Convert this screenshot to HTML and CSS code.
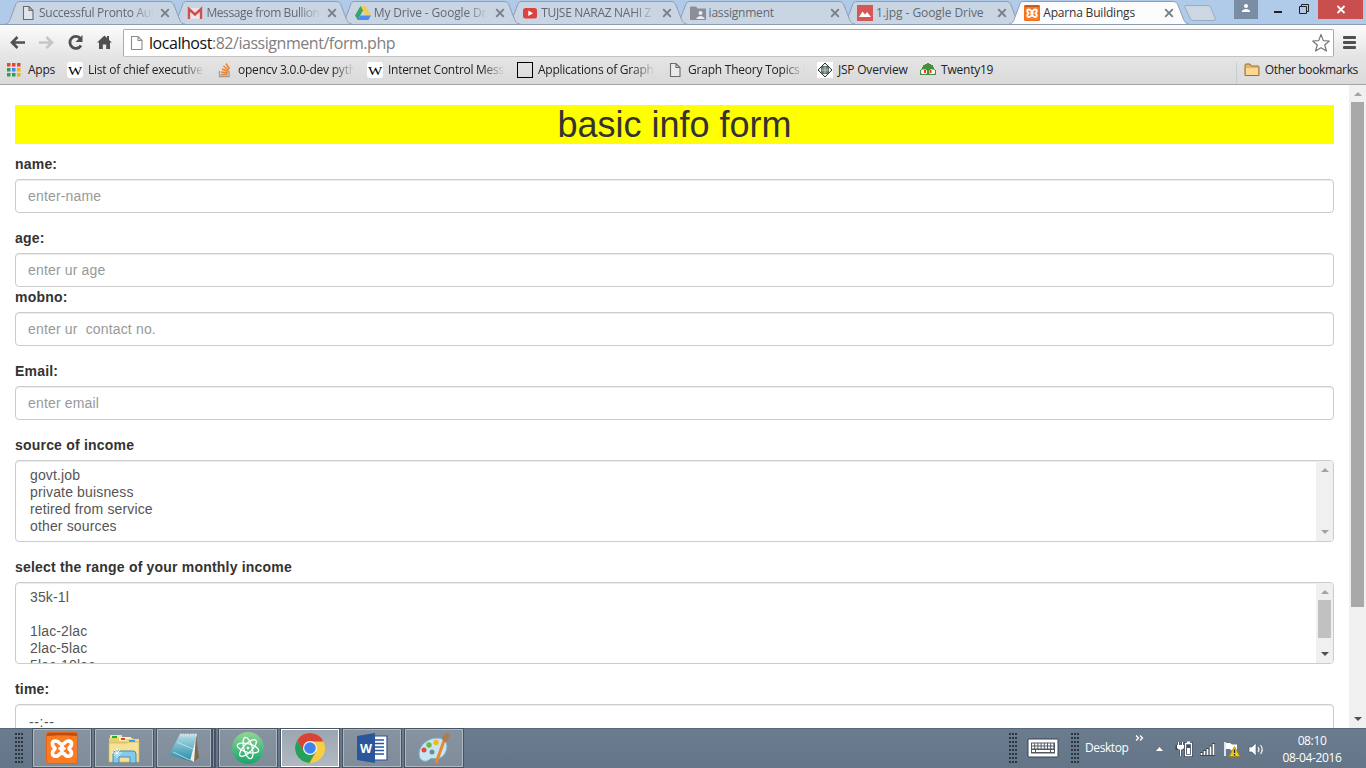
FILE: index.html
```html
<!DOCTYPE html>
<html lang="en">
<head>
<meta charset="utf-8">
<title>Aparna Buildings</title>
<link rel="stylesheet" href="styles.css">
</head>
<body>
<svg width="0" height="0" class="defs">
  <defs>
    <symbol id="tab" viewBox="0 0 182 25"><path d="M0 24C4 24 5 20 6 17L10.500 5C11.500 2 12.500 1.500 15 1.500H164C167 1.500 168 3 169 5L174 18C175.500 22 177 24 180 24" /></symbol>
    <symbol id="x" viewBox="0 0 10 10"><path d="M1.200 1.200L8.800 8.800M8.800 1.200L1.200 8.800" fill="none" stroke="currentColor" stroke-width="1.900"/></symbol>
    <symbol id="page" viewBox="0 0 16 16"><path d="M3.500 1.500H9L13 5.500V14.500H3.500ZM9 1.500V5.500H13" fill="#f6f6f6" fill-opacity=".5" stroke="#6b6b6b" stroke-width="1.100"/></symbol>
    <symbol id="xampp" viewBox="0 0 32 32"><rect width="32" height="32" rx="3" fill="#e8650f"/><rect x="1" y="1" width="30" height="30" rx="3" fill="#fb7a24"/><path d="M1 3Q1 1 3 1H29Q31 1 31 3V4Q16 2.500 1 4Z" fill="#ba4e18"/><path d="M14 11.500C11 7.500 6 8.500 6.500 12.500C6.700 15 9 15.500 9 16.500C9 17.500 6.500 18.500 6.500 21C6.500 25 11.500 25.500 14 21.500H18C20.500 25.500 25.500 25 25.500 21C25.500 18.500 23 17.500 23 16.500C23 15.500 25.300 15 25.500 12.500C26 8.500 21 7.500 18 11.500M14 16.500H18M16 12V21" fill="none" stroke="#fff" stroke-width="3.600" stroke-linejoin="round" stroke-linecap="round"/></symbol>
    <symbol id="wiki" viewBox="0 0 16 16"><rect width="16" height="16" rx="3" fill="#fff"/><text x="8" y="12.500" text-anchor="middle" font-family="Liberation Serif, serif" font-size="13.500" textLength="14" lengthAdjust="spacingAndGlyphs" fill="#000">W</text></symbol>
  </defs>
</svg>
<div class="screen">
  <header class="browser">
    <div class="tabstrip">
      <div class="tab t1"><svg class="shape"><use href="#tab"/></svg><svg class="ico"><use href="#page"/></svg><span class="ttl fade">Successful Pronto Aut</span><svg class="x"><use href="#x"/></svg></div>
      <div class="tab t2"><svg class="shape"><use href="#tab"/></svg><svg class="ico" viewBox="0 0 16 16"><path d="M1 3H15V14H1Z" fill="#e9e7ea"/><path d="M2 14V4L8 9.500L14 4V14" fill="none" stroke="#cf514d" stroke-width="2.400"/></svg><span class="ttl fade">Message from Bullion</span><svg class="x"><use href="#x"/></svg></div>
      <div class="tab t3"><svg class="shape"><use href="#tab"/></svg><svg class="ico" viewBox="0 0 16 16"><path d="M5.500 1H10.500L16 10.500H10.500Z" fill="#f2cb52"/><path d="M5.500 1L8 5.500L2.700 15L0 10.500Z" fill="#35a667"/><path d="M5.300 10.500H16L13.400 15H2.700Z" fill="#4d8bed"/></svg><span class="ttl fade">My Drive - Google Dr</span><svg class="x"><use href="#x"/></svg></div>
      <div class="tab t4"><svg class="shape"><use href="#tab"/></svg><svg class="ico" viewBox="0 0 16 16"><rect x="1" y="3" width="14" height="10.500" rx="2.500" fill="#dc4340"/><path d="M6.300 5.500V11L11 8.200Z" fill="#fff"/></svg><span class="ttl fade">TUJSE NARAZ NAHI Z</span><svg class="x"><use href="#x"/></svg></div>
      <div class="tab t5"><svg class="shape"><use href="#tab"/></svg><svg class="ico" viewBox="0 0 16 16"><path d="M0 2.500Q0 1.500 1 1.500H6L7.500 3.500H16V15H0Z" fill="#8b8f95"/><circle cx="10.500" cy="8" r="2" fill="#e6edf5"/><path d="M6.500 14V13Q10.500 9 14.500 13V14Z" fill="#e6edf5"/></svg><span class="ttl">iassignment</span><svg class="x"><use href="#x"/></svg></div>
      <div class="tab t6"><svg class="shape"><use href="#tab"/></svg><svg class="ico" viewBox="0 0 16 16"><rect width="16" height="16" fill="#d55854"/><path d="M2 12L5.500 6.500L8 9.500L10 7L14 12Z" fill="#fff"/></svg><span class="ttl">1.jpg - Google Drive</span><svg class="x"><use href="#x"/></svg></div>
      <div class="tab active"><svg class="shape"><use href="#tab"/></svg><svg class="ico"><use href="#xampp"/></svg><span class="ttl">Aparna Buildings</span><svg class="x"><use href="#x"/></svg></div>
      <svg class="newtab" viewBox="0 0 34 18"><path d="M3 1.500H25Q27 1.500 28 4L32 14Q33 16.500 31 16.500H10Q8 16.500 7 14L2 3.500Q1 1.500 3 1.500Z" fill="#cdd7e4" stroke="#9cabbf"/></svg>
      <div class="winctl">
        <svg class="user" viewBox="0 0 24 19"><circle cx="12" cy="6" r="2" fill="#fff"/><path d="M8 12V10.500Q12 7.500 16 10.500V12Z" fill="#fff"/></svg>
        <svg class="wc" viewBox="0 0 60 19"><path d="M16 12H24" stroke="#222" stroke-width="2"/><path d="M41.500 6.500H48.500V13.500H41.500ZM43.500 6.500V4.500H50.500V11.500H48.500" fill="none" stroke="#222"/></svg>
        <svg class="close" viewBox="0 0 45 19"><path d="M19.500 6L26.500 13M26.500 6L19.500 13" stroke="#fff" stroke-width="1.800"/></svg>
      </div>
    </div>
    <div class="toolbar">
      <svg class="nav" viewBox="0 0 118 30">
        <path d="M11.500 17.500H25M17.500 12L12 17.500L17.500 23" fill="none" stroke="#505050" stroke-width="2.600"/>
        <path d="M39 17.500H52.500M46.500 12L52 17.500L46.500 23" fill="none" stroke="#c6c6c6" stroke-width="2.600"/>
        <path d="M80.500 13.500A6 6 0 1 0 81 20.500" fill="none" stroke="#505050" stroke-width="2.800"/><path d="M82.500 10V17H75.500Z" fill="#505050"/>
        <path d="M97 17.500L104.500 10.500L107 13V11H109V15L112 17.500H110V24H106.200V19.500H102.800V24H99V17.500Z" fill="#505050"/>
      </svg>
      <div class="omnibox">
        <svg class="pg" viewBox="0 0 16 16"><path d="M3.500 1.500H10L14 5.500V14.500H3.500ZM10 1.500V5.500H14" fill="#fff" stroke="#8b8b8b" stroke-width="1.100"/></svg>
        <span class="url"><b>localhost</b>:82/iassignment/form.php</span>
        <svg class="star" viewBox="0 0 20 20"><path d="M10 1.500L12.300 7.600L18.300 8L13.700 12L15.500 18L10 14.700L4.500 18L6.300 12L1.700 8L7.700 7.600Z" fill="#fff" stroke="#777" stroke-width="1.200" stroke-linejoin="round"/></svg>
      </div>
      <div class="menu"><i></i><i></i><i></i></div>
    </div>
    <div class="bookmarks">
      <div class="bm b1"><svg viewBox="0 0 14 14"><g fill="#ea4335"><path d="M0 0h3.500v3.500H0zM5 0h3.500v3.500H5zM10 0h3.500v3.500H10z"/></g><path d="M0 5h3.500v3.500H0zM0 10h3.500v3.500H0zM5 10h3.500v3.500H5z" fill="#2e9e57"/><path d="M5 5h3.500v3.500H5z" fill="#4285f4"/><path d="M10 5h3.500v3.500H10zM10 10h3.500v3.500H10z" fill="#f4b400"/></svg><span>Apps</span></div>
      <div class="bm b2"><svg><use href="#wiki"/></svg><span class="fade">List of chief executive</span></div>
      <div class="bm b3"><svg viewBox="0 0 16 16"><path d="M2.500 9V14.500H12V9" fill="none" stroke="#999" stroke-width="1.300"/><path d="M4 12.500H10.500M4.200 10L10.700 11M5 7L11 9.500M6.500 4L11.500 8.200M9 1.500L12.500 7" stroke="#ef7f22" stroke-width="1.400"/></svg><span class="fade">opencv 3.0.0-dev pyth</span></div>
      <div class="bm b4"><svg><use href="#wiki"/></svg><span class="fade">Internet Control Mess</span></div>
      <div class="bm b5"><svg viewBox="0 0 16 16"><rect x=".5" y=".5" width="15" height="15" fill="none" stroke="#000"/></svg><span class="fade">Applications of Graph</span></div>
      <div class="bm b6"><svg><use href="#page"/></svg><span class="fade">Graph Theory Topics i</span></div>
      <div class="bm b7"><svg viewBox="0 0 16 16"><rect width="16" height="16" fill="#fff"/><path d="M8 1L15 8L8 15L1 8Z" fill="#eee" stroke="#333"/><rect x="4.500" y="4.500" width="7" height="7" rx="2" fill="#6c8c7d" stroke="#444"/><path d="M8 4V12M4 8H12" stroke="#c7d6cd" stroke-width=".8"/></svg><span>JSP Overview</span></div>
      <div class="bm b8"><svg viewBox="0 0 16 16"><path d="M7 1H9V2H11V3H13V5H14V7H15V8H16V13H0V8H1V7H2V5H3V3H5V2H7Z" fill="#45913a"/><rect x="1" y="7.500" width="6" height="4.500" rx="1.500" fill="#fff"/><rect x="9" y="7.500" width="6" height="4.500" rx="1.500" fill="#fff"/><path d="M4 8h2v3H4zM9.500 8h2v3h-2z" fill="#e6382b"/></svg><span>Twenty19</span></div>
      <div class="bm other"><svg viewBox="0 0 16 16"><path d="M1 13V3Q1 2 2 2H6L7.500 4H14Q15 4 15 5V13.500H1Z" fill="#e5b465" stroke="#94703a"/><path d="M2 6H14V13H2Z" fill="#fcd992"/></svg><span>Other bookmarks</span></div>
    </div>
  </header>

  <main class="viewport">
    <div class="page">
      <h1>basic info form</h1>
      <div class="group"><label for="name">name:</label><input id="name" class="control" placeholder="enter-name"></div>
      <div class="group tight"><label for="age">age:</label><input id="age" class="control" placeholder="enter ur age"></div>
      <div class="group"><label for="mob">mobno:</label><input id="mob" class="control" placeholder="enter ur  contact no."></div>
      <div class="group"><label for="email">Email:</label><input id="email" class="control" placeholder="enter email"></div>
      <div class="group"><label>source of income</label>
        <div class="list"><ul><li>govt.job</li><li>private buisness</li><li>retired from service</li><li>other sources</li></ul>
          <div class="bar"><i class="up"></i><i class="down"></i></div></div></div>
      <div class="group"><label>select the range of your monthly income</label>
        <div class="list"><ul><li>35k-1l</li><li></li><li>1lac-2lac</li><li>2lac-5lac</li><li>5lac-10lac</li></ul>
          <div class="bar"><i class="up"></i><i class="thumb"></i><i class="down on"></i></div></div></div>
      <div class="group"><label>time:</label><div class="control time">--:--</div></div>
    </div>
    <div class="bar main"><i class="up"></i><i class="thumb"></i><i class="down on"></i></div>
  </main>

  <footer class="taskbar">
    <i class="grip g1"></i>
    <div class="apps">
      <div class="app"><svg viewBox="0 0 32 32"><use href="#xampp"/></svg></div>
      <div class="app"><svg viewBox="0 0 32 32"><path d="M2 3H14V7H2Z" fill="#f6e5a0"/><path d="M4 4h5v2H4z" fill="#17b52e"/><path d="M1 6H25V28H1Z" fill="#e9cd70"/><path d="M11 5H23V9H11Z" fill="#fff1b6"/><path d="M13 6h4v2h-4z" fill="#dc4425"/><path d="M18 7H31V29H18Z" fill="#efd883"/><path d="M21 8h6v2h-6z" fill="#2a9be4"/><path d="M1 11H19L21 10H31V30H1Z" fill="#f5e298" stroke="#d0b558" stroke-width=".7"/><path d="M5 31V22Q5 19 8 19H25Q28 19 28 22V31H22V25H11V31Z" fill="#87c8e8" stroke="#438db8"/><path d="M9 16V26M4 21H14M6 18L12 24M12 18L6 24" stroke="#fff" stroke-width=".8"/></svg></div>
      <div class="app stacked"><svg viewBox="0 0 32 32"><defs><linearGradient id="note" x1="0" y1="0" x2="0" y2="1"><stop offset="0" stop-color="#b4dfea"/><stop offset="1" stop-color="#268ba5"/></linearGradient></defs><path d="M28 3L31 26L25 30L13 26Z" fill="#7b694b"/><path d="M28 4L26 30L20 27Z" fill="#eee"/><path d="M12 2H29L22 29L1 23Z" fill="url(#note)"/><path d="M5 20L22 28M9 10L25 17" stroke="#d8f2f7" stroke-width=".7"/><path d="M12 3H29" stroke="#d8dbda" stroke-width="3" stroke-dasharray="1.500 1"/></svg></div>
      <div class="app"><svg viewBox="0 0 32 32"><defs><linearGradient id="atom" x1="0" y1="0" x2="0" y2="1"><stop offset="0" stop-color="#91d594"/><stop offset="1" stop-color="#15a66b"/></linearGradient></defs><circle cx="16" cy="16" r="16" fill="url(#atom)"/><g fill="none" stroke="#fff" stroke-width="1.300"><ellipse cx="16" cy="16" rx="11" ry="4.200" transform="rotate(15 16 16)"/><ellipse cx="16" cy="16" rx="11" ry="4.200" transform="rotate(75 16 16)"/><ellipse cx="16" cy="16" rx="11" ry="4.200" transform="rotate(135 16 16)"/></g><circle cx="16" cy="16" r="1.500" fill="#fff"/></svg></div>
      <div class="app current"><svg viewBox="0 0 32 32"><circle cx="16" cy="16" r="15" fill="#f9ce45"/><path d="M3 8.500A15 15 0 0 1 29.500 9.500H16L10 20Z" fill="#da4437"/><path d="M3 8.500A15 15 0 0 0 15.500 31L22 20L10.500 20Z" fill="#24a05a"/><path d="M22 19L15.500 31" stroke="#d8ac31" stroke-width=".5"/><circle cx="16" cy="16" r="7" fill="#f4f4f4"/><circle cx="16" cy="16" r="5.800" fill="#4381ef"/></svg></div>
      <div class="app"><svg viewBox="0 0 32 32"><path d="M17 4H31V28H17Z" fill="#fff" stroke="#2b579a" stroke-width="1.200"/><path d="M19 8H28M19 11.500H28M19 15H28M19 18.500H28M19 22H28" stroke="#2b579a" stroke-width="1.400"/><path d="M1 4L19 1V31L1 28Z" fill="#2b579a"/><text x="10" y="20.500" text-anchor="middle" font-family="Open Sans, sans-serif" font-size="13" font-weight="700" fill="#fff" textLength="12" lengthAdjust="spacingAndGlyphs">W</text></svg></div>
      <div class="app"><svg viewBox="0 0 32 32"><path d="M1 22C1 13 10 6 19 6C31 6 31 18 25 24C20 29 14 25 12 27C9 31 1 30 1 22Z" fill="#cae5f2" stroke="#7caec8"/><circle cx="6" cy="18" r="2.500" fill="#df4b3f"/><circle cx="11" cy="13" r="2.700" fill="#6bb845"/><circle cx="18" cy="10.500" r="2.700" fill="#efb827"/><circle cx="14" cy="20" r="2.500" fill="#718a9d"/><path d="M27 6L18 31" stroke="#e48a31" stroke-width="3"/><path d="M25 9L24 5Q27 4 28 0L32 3Q31 7 28 10Z" fill="#a97c55"/></svg></div>
    </div>
    <div class="tray">
      <i class="grip"></i>
      <svg class="keyboard" viewBox="0 0 32 20"><rect x="1" y="1" width="30" height="18" rx="1" fill="#fff" stroke="#39434e"/><path d="M4 4.500H28V15.500H4Z" fill="#505961"/><path d="M5 6.500H27M5 9.500H27" stroke="#fff" stroke-width="2" stroke-dasharray="2.200 1"/><path d="M5 13H8M9 13H23M24 13H27" stroke="#fff" stroke-width="2"/></svg>
      <i class="grip"></i>
      <span class="desk">Desktop</span><svg class="chev" viewBox="0 0 9 6"><path d="M1 .5L3.500 3L1 5.500M5 .5L7.500 3L5 5.500" fill="none" stroke="#fff" stroke-width="1.300"/></svg>
      <svg class="icons" viewBox="0 0 112 22"><path d="M1 13L4.500 9L8 13Z" fill="#fff"/>
        <g fill="none" stroke="#39444f" stroke-width="3"><path d="M23.500 4V7M27.500 4V7M22 8.500H29V10.500H22ZM25.500 11V18M30.500 5.500H36.500V17.500H30.500Z"/></g>
        <path d="M23.500 4V7M27.500 4V7M25.500 11V18" stroke="#fff" stroke-width="1.300"/><path d="M22 7H29V10L27.500 11.500H23.500L22 10Z" fill="#fff"/>
        <path d="M30.500 5.500H36.500V17.500H30.500Z" fill="#465260" stroke="#fff" stroke-width="1.300"/><path d="M32 3.500H35V5H32Z" fill="#fff"/><path d="M32 10H35V16H32Z" fill="#fff"/>
        <path d="M46.500 14V18M49.500 12V18M52.500 10V18M55.500 7.500V18M58.500 5V18" stroke="#3d4854" stroke-width="3"/><path d="M46.500 15V17M49.500 13V17M52.500 11V17M55.500 8.500V17M58.500 6V17" stroke="#fff" stroke-width="1.700"/>
        <path d="M70 4V18" stroke="#fff" stroke-width="1.600"/><path d="M71 5H75L77 6.500H82V13H77L75 11H71Z" fill="#fff"/><path d="M79.500 8.500L85 18.500H74Z" fill="#f2cb12" stroke="#a47d00" stroke-width=".7"/><path d="M79.500 11.500V15M79.500 16V17.500" stroke="#222" stroke-width="1.300"/>
        <path d="M94 9H97L101 5V18L97 14H94Z" fill="#fff" stroke="#46515e" stroke-width=".6"/><path d="M103 9Q105 11.500 103 14M105.500 7Q109 11.500 105.500 16" fill="none" stroke="#e8edf1" stroke-width="1.200"/></svg>
      <div class="clock"><span>08:10</span><span>08-04-2016</span></div>
    </div>
  </footer>
</div>
</body>
</html>
```
FILE: styles.css
```css
* { box-sizing: border-box; }
body { margin: 0; font-family: "Open Sans", sans-serif; }
svg { display: block; flex: none; }
.defs { position: absolute; }
.screen { width: 1366px; height: 768px; display: flex; flex-direction: column; overflow: hidden; background: #fff; }

/* Browser chrome */
.browser { flex: none; height: 85px; border-bottom: 1px solid #a5a5a5; background: linear-gradient(#b0cbe9 0 24px, #fcfcfc 25px, #e5e5e5 56px, #dadada 84px); font-size: 12px; }
.tabstrip { height: 25px; display: flex; padding-left: 5px; border-bottom: 1px solid #8c9cb1; }
.tab { width: 167.400px; height: 25px; flex: none; position: relative; display: flex; padding: 5px 0 0 15px; color: #626970; }
.shape { position: absolute; left: 0; top: 0; width: 182px; height: 25px; fill: #cad5e3; stroke: #8e9db2; }
.t1 { z-index: 7; } .t2 { z-index: 6; } .t3 { z-index: 5; } .t4 { z-index: 4; } .t5 { z-index: 3; } .t6 { z-index: 2; }
.active { z-index: 9; color: #333; }
.active .shape { fill: #fcfcfc; }
.tab .ico, .ttl, .tab .x { position: relative; }
.ico { width: 16px; height: 16px; }
.ttl { width: 116px; margin-left: 3px; line-height: 16px; white-space: pre; letter-spacing: -.2px; }
.t1 .ttl { letter-spacing: -.28px; }
.t2 .ttl { letter-spacing: -.4px; }
.t3 .ttl { letter-spacing: -.15px; }
.t4 .ttl { letter-spacing: -.3px; }
.t6 .ttl { letter-spacing: -.07px; }
.fade { mask-image: linear-gradient(90deg, #000 80%, transparent 99%); }
.tab .x { width: 10px; height: 10px; margin: 3px 0 0 5px; color: #777e87; }
.newtab { width: 34px; height: 18px; margin: 4px 0 0 6px; }
.winctl { display: flex; margin-left: auto; padding-right: 3px; position: relative; }
.user { width: 24px; height: 19px; background: #7b8da2; }
.wc { width: 60px; height: 19px; }
.close { width: 45px; height: 19px; background: #c94f4f; }
.toolbar { height: 32px; display: flex; }
.nav { width: 118px; height: 30px; }
.omnibox { width: 1211px; height: 28px; margin: 4px 0 0 5px; display: flex; align-items: center; border: 1px solid #aaa; border-bottom-color: #c2c2c2; border-radius: 2px; background: #fff; padding: 0 2px 0 4px; }
.pg { width: 16px; height: 16px; }
.url { flex: 1; margin-left: 5px; font-size: 16px; line-height: 22px; color: #808080; letter-spacing: -.46px; }
.url b { font-weight: 400; color: #111; }
.star { width: 20px; height: 20px; }
.menu { width: 13px; display: flex; flex-direction: column; gap: 2px; padding-top: 11px; margin-left: 9px; }
.menu i { height: 3px; border-radius: 1px; background: #505050; }
.bookmarks { display: flex; height: 27px; padding: 5px 8px 0 7px; color: #222; }
.bm { display: flex; flex: none; gap: 5px; line-height: 16px; white-space: pre; letter-spacing: -.22px; }
.bm svg { width: 16px; height: 16px; }
.bm .fade { width: 118px; flex: none; }
.b1 { width: 60px; gap: 7px; } .b1 svg { width: 14px; height: 14px; margin-top: 1px; }
.b2, .b3, .b4, .b5, .b6 { width: 150px; }
.b4 { letter-spacing: -.28px; }
.b5 { letter-spacing: -.25px; }
.b7 { width: 103px; }
.other { margin-left: auto; border-left: 1px solid #c3ced9; padding-left: 7px; letter-spacing: -.35px; }

/* Web page */
.viewport { flex: 1; min-height: 0; display: flex; overflow: hidden; font: 14px/20px "Liberation Sans", Arial, sans-serif; color: #333; }
.page { width: 1349px; padding: 20px 15px 0; }
h1 { height: 39px; margin: 0 0 10px; background: #ff0; font-size: 36px; line-height: 40px; font-weight: 400; text-align: center; }
.group { margin-bottom: 15px; }
.tight { margin-bottom: 0; }
label { display: block; margin-bottom: 5px; font-weight: 700; letter-spacing: .2px; }
.control { display: block; width: 100%; height: 34px; padding: 6px 12px; border: 1px solid #ccc; border-radius: 4px; box-shadow: inset 0 1px 1px rgba(0,0,0,.075); font: 14px/20px "Liberation Sans", Arial, sans-serif; letter-spacing: .16px; color: #555; background: #fff; outline: 0; }
.control::placeholder { color: #999; opacity: 1; }
.time { padding: 7px 13px; letter-spacing: .6px; }
.list { display: flex; height: 82px; border: 1px solid #ccc; border-radius: 4px; overflow: hidden; box-shadow: inset 0 1px 1px rgba(0,0,0,.075); }
.list ul { flex: 1; margin: 0; padding: 6px 14px; list-style: none; color: #555; line-height: 17px; letter-spacing: .15px; }
.list li { height: 17px; }
.bar { width: 17px; flex: none; background: #f0f0f0; display: flex; flex-direction: column; align-items: center; padding: 7px 0; }
.up { border: 4px solid transparent; border-top: 0; border-bottom-color: #a3a3a3; }
.down { margin-top: auto; border: 4px solid transparent; border-bottom: 0; border-top-color: #a3a3a3; }
.down.on { border-top-color: #505050; }
.thumb { width: 13px; height: 38px; margin-top: 6px; background: #c1c1c1; }
.main .thumb { height: 505px; background: #a8a8a8; }

/* Taskbar */
.taskbar { flex: none; height: 40px; display: flex; background: linear-gradient(#566779 0 1px, #6b7c8f 1px, #647588); font-size: 12px; color: #fff; }
.grip { width: 8px; height: 30px; margin-top: 5px; background: radial-gradient(circle at 1px 1px, #2b3641 .8px, transparent 1.300px) 0 0 / 3px 4px; }
.g1 { margin-left: 15px; }
.apps { display: flex; gap: 2px; margin-left: 9px; }
.app { width: 60px; height: 40px; display: flex; align-items: center; justify-content: center; border: 1px solid #465463; box-shadow: inset 0 0 0 1px #adb7c1; background: linear-gradient(#8793a0, #7f8c9a); }
.app svg { width: 32px; height: 32px; }
.stacked { border-right: 5px double #465463; padding-right: 0; }
.current { background: linear-gradient(#9ba6b1, #b1bac4); box-shadow: inset 0 0 0 1px #fff; }
.tray { margin-left: auto; display: flex; }
.keyboard { width: 32px; height: 20px; margin: 10px 12px 0 10px; }
.desk { margin: 12px 0 0 6px; line-height: 16px; width: 49px; letter-spacing: -.4px; }
.chev { width: 9px; height: 6px; margin: 7px 0 0 1px; }
.icons { width: 112px; height: 22px; margin: 10px 0 0 11px; }
.clock { width: 76px; margin: 4px 16px 0 7px; display: flex; flex-direction: column; align-items: center; line-height: 17px; letter-spacing: -.37px; }
```
